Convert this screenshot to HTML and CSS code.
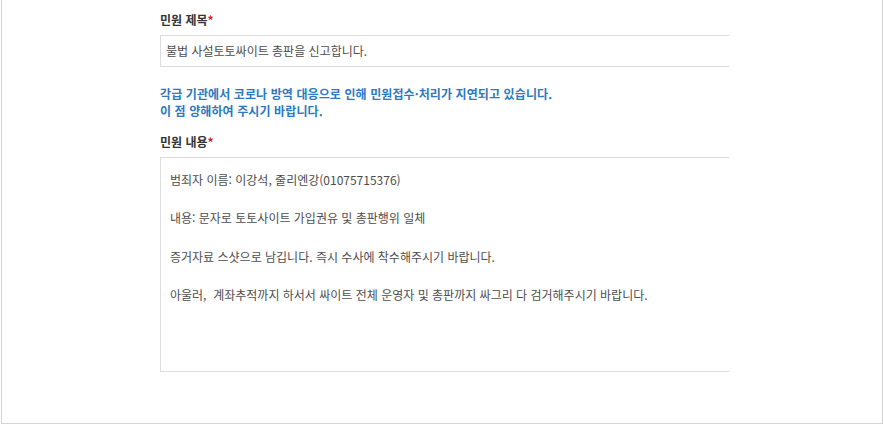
FILE: index.html
```html
<!DOCTYPE html>
<html lang="ko">
<head>
<meta charset="utf-8">
<title>민원 신청</title>
<link rel="stylesheet" href="styles.css">
</head>
<body>
<div class="panel">
  <div class="label">민원 제목<span class="req">*</span></div>
  <div class="field input">불법 사설토토싸이트 총판을 신고합니다.</div>
  <p class="notice">각급 기관에서 코로나 방역 대응으로 인해 민원접수·처리가 지연되고 있습니다.<br>이 점 양해하여 주시기 바랍니다.</p>
  <div class="label label-gap">민원 내용<span class="req">*</span></div>
  <div class="field textarea">범죄자 이름: 이강석, 줄리엔강(01075715376)

내용: 문자로 토토사이트 가입권유 및 총판행위 일체

증거자료 스샷으로 남깁니다. 즉시 수사에 착수해주시기 바랍니다.

아울러,  계좌추적까지 하서서 싸이트 전체 운영자 및 총판까지 싸그리 다 검거해주시기 바랍니다.</div>
</div>
</body>
</html>
```
FILE: styles.css
```css
html, body {
  margin: 0;
  padding: 0;
  background: #fff;
}
body {
  font-family: "Noto Sans CJK KR", "Noto Sans", sans-serif;
  font-size: 12px;
}
.panel {
  margin-left: 1px;
  width: 882px;
  height: 424px;
  box-sizing: border-box;
  border: 1px solid #d4d4d4;
  border-top: 0;
  padding: 11px 0 0 158px;
}
.label {
  font-weight: 700;
  line-height: 18px;
  color: #333;
  margin-bottom: 6px;
}
.label-gap {
  margin-top: 14px;
}
.req {
  color: #d3232a;
}
.field {
  width: 569px;
  box-sizing: border-box;
  border: 1px solid #dcdcdc;
  border-right: 0;
  color: #4d4d4d;
}
.input {
  height: 32px;
  line-height: 30px;
  padding: 0 5px;
}
.notice {
  margin: 18px 0 0;
  line-height: 17px;
  color: #2b79c2;
  font-weight: 700;
  letter-spacing: 0.1px;
}
.textarea {
  height: 215px;
  padding: 12px 9px;
  line-height: 19.2px;
  white-space: pre-wrap;
}
```
